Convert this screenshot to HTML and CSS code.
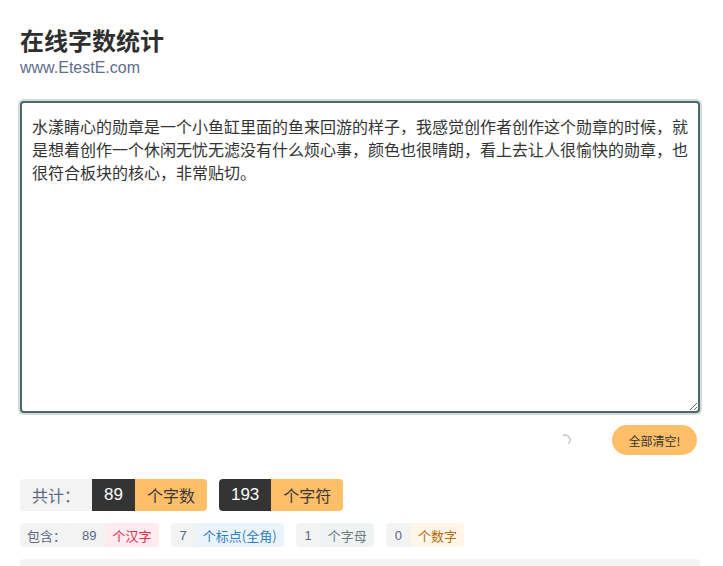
FILE: index.html
```html
<!DOCTYPE html>
<html lang="zh-CN">
<head>
<meta charset="utf-8">
<title>在线字数统计</title>
<link rel="stylesheet" href="styles.css">
</head>
<body>
<div class="page">
  <header class="head">
    <h1 class="title">在线字数统计</h1>
    <div class="site">www.EtestE.com</div>
  </header>

  <textarea class="input" spellcheck="false">水漾睛心的勋章是一个小鱼缸里面的鱼来回游的样子，我感觉创作者创作这个勋章的时候，就是想着创作一个休闲无忧无滤没有什么烦心事，颜色也很晴朗，看上去让人很愉快的勋章，也很符合板块的核心，非常贴切。</textarea>

  <div class="controls">
    <svg class="spinner" width="14" height="14" viewBox="0 0 14 14" aria-hidden="true">
      <path d="M5.7 2.2 A5 5 0 0 1 11.1 9.9" fill="none" stroke="#d2d2d2" stroke-width="2" stroke-linecap="round"/>
    </svg>
    <button class="clear-btn" type="button">全部清空!</button>
  </div>

  <div class="totals">
    <div class="group">
      <span class="cell cell-label">共计：</span>
      <span class="cell cell-num">89</span>
      <span class="cell cell-unit">个字数</span>
    </div>
    <div class="group">
      <span class="cell cell-num">193</span>
      <span class="cell cell-unit">个字符</span>
    </div>
  </div>

  <div class="details">
    <div class="tag">
      <span class="tcell t-label">包含：</span>
      <span class="tcell t-num">89</span>
      <span class="tcell t-unit t-han">个汉字</span>
    </div>
    <div class="tag">
      <span class="tcell t-num">7</span>
      <span class="tcell t-unit t-punct">个标点(全角)</span>
    </div>
    <div class="tag">
      <span class="tcell t-num">1</span>
      <span class="tcell t-unit t-letter">个字母</span>
    </div>
    <div class="tag">
      <span class="tcell t-num">0</span>
      <span class="tcell t-unit t-digit">个数字</span>
    </div>
  </div>

  <div class="panel"></div>
</div>
</body>
</html>
```

FILE: styles.css
```css
html, body {
  margin: 0;
  padding: 0;
  background: #fff;
  overflow: hidden;
}

body {
  font-family: "Liberation Sans", "Noto Sans CJK SC", sans-serif;
  color: #333;
}

.page {
  padding: 25px 23px 0 20px;
}

.title {
  margin: 0;
  font-family: "Noto Sans CJK SC", sans-serif;
  font-size: 24px;
  line-height: 30px;
  font-weight: 700;
  color: #2f2f2f;
}

.site {
  margin-top: 3px;
  font-family: "Liberation Sans", sans-serif;
  font-size: 16px;
  line-height: 19px;
  color: #5d6d8c;
}

.input {
  display: block;
  box-sizing: border-box;
  width: 100%;
  height: 312px;
  margin: 24px 0 0;
  padding: 12px 8px 10px 10px;
  border: 2px solid #4f686d;
  border-radius: 4px;
  box-shadow: 0 0 0 2px #d3dadb;
  outline: none;
  resize: vertical;
  font-family: "Noto Sans CJK SC", sans-serif;
  font-size: 16px;
  line-height: 23px;
  color: #333;
  background: #fff;
}

.controls {
  display: flex;
  justify-content: flex-end;
  align-items: center;
  margin-top: 12px;
  height: 30px;
}

.spinner {
  display: block;
  margin-right: 40px;
}

.clear-btn {
  height: 30px;
  width: 85px;
  margin-right: 3px;
  padding: 0;
  border: none;
  border-radius: 15px;
  background: #ffbf69;
  color: #333;
  font-family: "Noto Sans CJK SC", sans-serif;
  font-size: 12px;
  cursor: pointer;
}

.totals {
  display: flex;
  gap: 12px;
  margin-top: 24px;
}

.group {
  display: flex;
  height: 32px;
  border-radius: 4px;
  overflow: hidden;
}

.cell {
  display: flex;
  align-items: center;
  padding: 0 12px;
  font-size: 16px;
}

.cell-label {
  background: #f3f3f3;
  color: #5a6884;
  font-family: "Noto Sans CJK SC", sans-serif;
}

.cell-num {
  background: #343434;
  color: #fff;
  font-family: "Liberation Sans", sans-serif;
  font-size: 17px;
}

.cell-unit {
  background: #ffbf69;
  color: #3a3a3a;
  font-family: "Noto Sans CJK SC", sans-serif;
}

.details {
  display: flex;
  gap: 12px;
  margin-top: 12px;
}

.tag {
  display: flex;
  height: 24px;
  border-radius: 4px;
  overflow: hidden;
}

.tcell {
  display: flex;
  align-items: center;
  font-size: 13px;
  font-family: "Noto Sans CJK SC", sans-serif;
}

.t-label {
  padding: 0 7px;
  background: #f3f3f3;
  color: #5a6884;
  border-radius: 4px;
}

.t-num {
  padding: 0 9px;
  background: #f3f3f3;
  color: #5a6884;
  font-family: "Liberation Sans", sans-serif;
}

.t-unit {
  padding: 0 7px;
}

.t-han {
  background: #ffebf0;
  color: #d9304f;
}

.t-punct {
  background: #ebf4fc;
  color: #2f7fbf;
}

.t-letter {
  background: #f0f3f4;
  color: #6a7d83;
}

.t-digit {
  background: #fff5e9;
  color: #b26c0c;
}

.panel {
  margin-top: 12px;
  height: 60px;
  border-radius: 4px;
  background: #f4f4f4;
}
```
